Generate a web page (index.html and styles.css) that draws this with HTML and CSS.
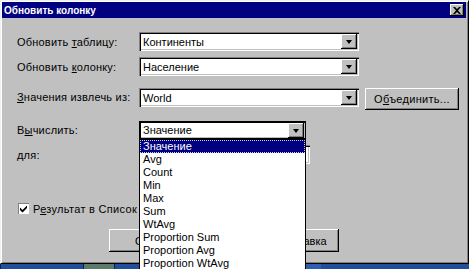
FILE: index.html
```html
<!DOCTYPE html>
<html lang="ru">
<head>
    <meta charset="UTF-8">
    <title>Обновить колонку</title>
    <link rel="stylesheet" href="styles.css">
</head>
<body>
    <div class="window">
        <div class="title-bar">
            <span class="title">Обновить колонку</span>
            <button type="button" class="close-btn">
                <svg width="8" height="7" viewBox="0 0 8 7"><path d="M0 0h2l2 2 2-2h2L5 3.5 8 7H6L4 5 2 7H0l3-3.5z" fill="#000"/></svg>
            </button>
        </div>
        <div class="dialog-body">
            <div class="row">
                <label class="field-label">Обновить <u>т</u>аблицу:</label>
                <div class="combo wide">
                    <span class="combo-text">Континенты</span>
                    <span class="arrow-btn"><i class="tri"></i></span>
                </div>
            </div>
            <div class="row">
                <label class="field-label">Обновить <u>к</u>олонку:</label>
                <div class="combo wide">
                    <span class="combo-text">Население</span>
                    <span class="arrow-btn"><i class="tri"></i></span>
                </div>
            </div>
            <div class="row row-source">
                <label class="field-label"><u>З</u>начения извлечь из:</label>
                <div class="combo wide">
                    <span class="combo-text">World</span>
                    <span class="arrow-btn"><i class="tri"></i></span>
                </div>
                <button type="button" class="push-btn merge-btn">О<u>б</u>ъединить...</button>
            </div>
            <div class="row row-calc">
                <label class="field-label">В<u>ы</u>числить:</label>
                <div class="combo calc">
                    <span class="combo-text">Значение</span>
                    <span class="arrow-btn"><i class="tri"></i></span>
                    <ul class="drop-list">
                        <li class="selected"><span>Значение</span></li>
                        <li>Avg</li>
                        <li>Count</li>
                        <li>Min</li>
                        <li>Max</li>
                        <li>Sum</li>
                        <li>WtAvg</li>
                        <li>Proportion Sum</li>
                        <li>Proportion Avg</li>
                        <li>Proportion WtAvg</li>
                    </ul>
                </div>
            </div>
            <div class="row row-for">
                <label class="field-label">для:</label>
                <div class="combo for"></div>
            </div>
            <div class="check-row">
                <span class="checkbox">
                    <svg width="9" height="9" viewBox="0 0 9 9"><path d="M1 3.5l2.5 2.5L8 1.5V4L3.5 8.5 1 6z" fill="#000"/></svg>
                </span>
                <span class="check-label">Р<u>е</u>зультат в Список</span>
            </div>
            <div class="button-row">
                <button type="button" class="push-btn">OK</button>
                <button type="button" class="push-btn">Отмена</button>
                <button type="button" class="push-btn">Справка</button>
            </div>
        </div>
    </div>
    <div class="taskbar">
        <span class="task t1"></span>
        <span class="task t2"></span>
        <span class="task t3"></span>
        <span class="task t4"></span>
    </div>
</body>
</html>
```

FILE: styles.css
```css
body {
    margin: 0;
    width: 469px;
    height: 269px;
    overflow: hidden;
    background-color: #c0c0c0;
    font-family: 'Liberation Sans', Arial, sans-serif;
    font-size: 11px;
    color: #000;
}

.window {
    box-sizing: border-box;
    width: 469px;
    height: 264px;
    border: 1px solid;
    border-color: #f0f0f0 #000 #000 #f0f0f0;
    box-shadow: inset 1px 1px #fff, inset -1px -1px #808080;
    background-color: #c0c0c0;
    padding: 1px 2px 0 1px;
}

.title-bar {
    height: 16px;
    background-color: #000080;
    display: flex;
    align-items: center;
    justify-content: space-between;
    padding: 0 2px 0 2px;
}

.title {
    color: #fff;
    font-weight: bold;
    font-size: 10px;
}

.close-btn {
    width: 14px;
    height: 12px;
    padding: 0;
    border: none;
    background-color: #c0c0c0;
    box-shadow: inset -1px -1px #000, inset 1px 1px #fff, inset -2px -2px #808080;
    display: flex;
    align-items: center;
    justify-content: center;
}

.dialog-body {
    padding: 14px 0 0 15px;
}

.row {
    display: flex;
    align-items: center;
    height: 19px;
    margin-bottom: 6px;
}

.row-source {
    height: 22px;
    align-items: flex-start;
    margin-top: 12px;
    margin-bottom: 11px;
}

.row-source .field-label {
    line-height: 19px;
}

.row-calc {
    height: 18px;
    margin-bottom: 6px;
}

.field-label {
    width: 122px;
    flex-shrink: 0;
    letter-spacing: 0.2px;
}

.combo {
    position: relative;
    box-sizing: border-box;
    height: 19px;
    background-color: #fff;
    box-shadow: inset 1px 1px #808080, inset 2px 2px #000, inset -1px -1px #fff, inset -2px -2px #c0c0c0;
    display: flex;
    align-items: center;
    justify-content: space-between;
    padding: 2px;
}

.combo.wide {
    width: 220px;
}

.combo.calc {
    width: 167px;
    height: 18px;
    box-shadow: inset 0 0 0 1px #000, inset 2px 2px #000, inset -2px -2px #c0c0c0;
}

.combo.for {
    width: 171px;
}

.combo-text {
    padding-left: 2px;
}

.arrow-btn {
    box-sizing: border-box;
    width: 16px;
    height: 15px;
    align-self: stretch;
    background-color: #c0c0c0;
    box-shadow: inset -1px -1px #000, inset 1px 1px #fff, inset -2px -2px #808080;
    display: flex;
    align-items: center;
    justify-content: center;
}

.tri {
    width: 0;
    height: 0;
    border-left: 3.5px solid transparent;
    border-right: 3.5px solid transparent;
    border-top: 4px solid #000;
    margin-top: 1px;
}

.drop-list {
    position: absolute;
    top: 18px;
    left: 0;
    width: 167px;
    box-sizing: border-box;
    margin: 0;
    padding: 0;
    list-style: none;
    background-color: #fff;
    border: 1px solid #000;
    z-index: 2;
}

.drop-list li {
    height: 13px;
    line-height: 13px;
    padding-left: 3px;
    font-size: 11px;
}

.drop-list li.selected {
    background-color: #000080;
    color: #fff;
    outline: 1px dotted #c8c8ff;
    outline-offset: -1px;
}

.push-btn {
    box-sizing: border-box;
    height: 23px;
    width: 68px;
    padding: 0;
    border: none;
    background-color: #c0c0c0;
    font-family: 'Liberation Sans', Arial, sans-serif;
    font-size: 11px;
    color: #000;
    box-shadow: inset -1px -1px #000, inset 1px 1px #fff, inset -2px -2px #808080;
}

.merge-btn {
    width: 94px;
    height: 22px;
    margin-left: 6px;
    letter-spacing: 0.3px;
}

.check-row {
    display: flex;
    align-items: center;
    margin-top: 38px;
    height: 13px;
    padding-left: 1px;
}

.checkbox {
    box-sizing: border-box;
    width: 11px;
    height: 11px;
    background-color: #fff;
    box-shadow: inset 1px 1px #808080, inset -1px -1px #fff;
    display: flex;
    align-items: center;
    justify-content: center;
}

.check-label {
    margin-left: 4px;
    letter-spacing: 0.3px;
}

.button-row {
    display: flex;
    gap: 13px;
    margin-top: 14px;
    padding-left: 92px;
}

.taskbar {
    height: 5px;
    display: flex;
    background-color: #1f4e9a;
}

.task {
    height: 5px;
    border-left: 1px solid #0a1f4a;
}

.t1 { width: 82px; }
.t2 { width: 30px; background-color: #5a7a6a; }
.t3 { width: 115px; }
.t4 { width: 90px; background-color: #2c5fb0; }
```
